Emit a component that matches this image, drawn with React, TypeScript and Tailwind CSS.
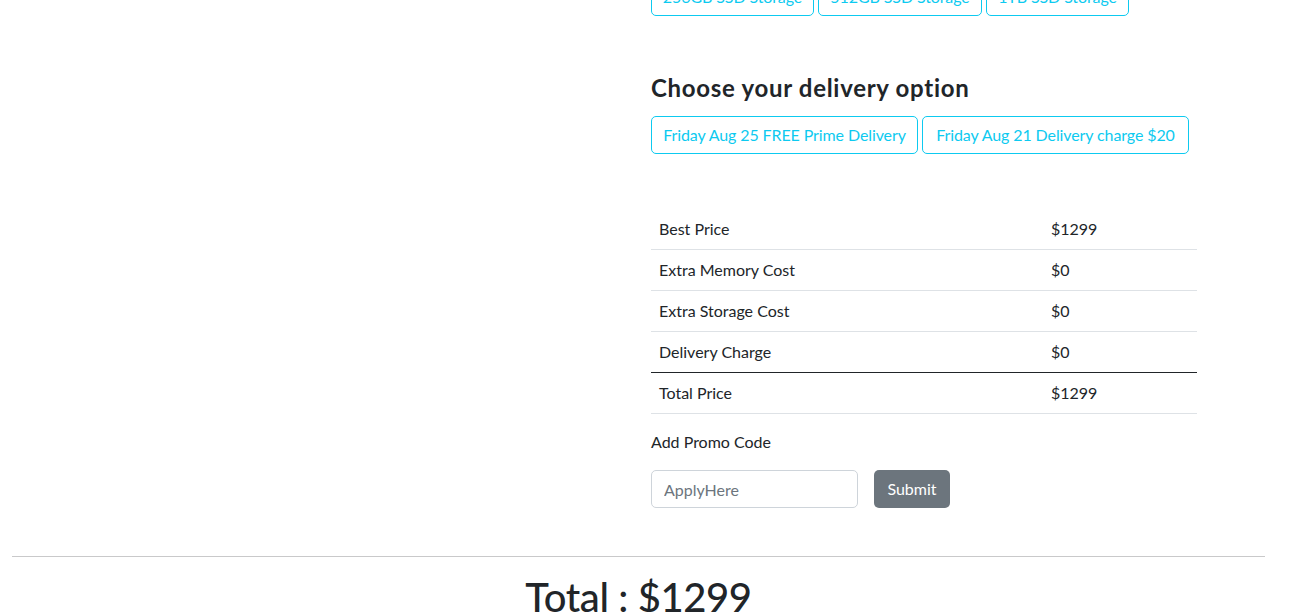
import React from "react";

const font = { fontFamily: "Lato, 'Noto Sans', sans-serif" };

function OutlineBtn({ children, w }: { children: React.ReactNode; w: string }) {
  return (
    <button
      className={`h-[38px] ${w} shrink-0 rounded-[5px] border border-[#0dcaf0] bg-white text-[16px] leading-[24px] tracking-[-0.1px] text-[#0dcaf0] whitespace-nowrap`}
    >
      {children}
    </button>
  );
}

const rows: [string, string][] = [
  ["Best Price", "$1299"],
  ["Extra Memory Cost", "$0"],
  ["Extra Storage Cost", "$0"],
  ["Delivery Charge", "$0"],
];

export default function App() {
  return (
    <div className="min-h-[612px] bg-white text-[#212529]" style={font}>
      <div className="mt-[-22px] flex">
        <div className="w-[651px] shrink-0" />
        <div className="flex w-[546px] flex-col">
          <div className="flex gap-[4px]">
            <OutlineBtn w="w-[163px]">256GB SSD Storage</OutlineBtn>
            <OutlineBtn w="w-[164px]">512GB SSD Storage</OutlineBtn>
            <OutlineBtn w="w-[143px]">1TB SSD Storage</OutlineBtn>
          </div>
          <h4 className="mt-[57px] text-[24px] font-bold leading-[29px] tracking-[0.7px]">Choose your delivery option</h4>
          <div className="mt-[14px] flex gap-[4px]">
            <OutlineBtn w="w-[267px]">Friday Aug 25 FREE Prime Delivery</OutlineBtn>
            <OutlineBtn w="w-[267px]">Friday Aug 21 Delivery charge $20</OutlineBtn>
          </div>
          <table className="mt-[55px] w-full border-collapse text-[16px] leading-[24px]">
            <tbody>
              {rows.map(([k, v], i) => (
                <tr
                  key={k}
                  className={i === 3 ? "border-b border-[#212529]" : "border-b border-[#dee2e6]"}
                >
                  <td className="w-[392px] px-2 py-2">{k}</td>
                  <td className="px-2 py-2">{v}</td>
                </tr>
              ))}
              <tr className="border-b border-[#dee2e6]">
                <td className="px-2 py-2">Total Price</td>
                <td className="px-2 py-2">$1299</td>
              </tr>
            </tbody>
          </table>
          <p className="mt-[16px] text-[16px] leading-[24px]">Add Promo Code</p>
          <div className="mt-[16px] flex gap-[16px]">
            <input
              className="h-[38px] w-[207px] rounded-[5px] border border-[#ced4da] px-3 text-[16px] text-[#212529] outline-none placeholder:text-[#6c757d]"
              placeholder="ApplyHere"
            />
            <button className="h-[38px] w-[76px] rounded-[5px] bg-[#6c757d] text-[16px] text-white">Submit</button>
          </div>
        </div>
      </div>
      <div className="mx-[12px] mt-[48px] w-[1253px] border-t border-[#c9c9ca]" />
      <h1 className="mt-[16px] w-[1277px] text-center text-[40px] font-medium leading-[48px] tracking-[-0.4px]">Total : $1299</h1>
    </div>
  );
}
